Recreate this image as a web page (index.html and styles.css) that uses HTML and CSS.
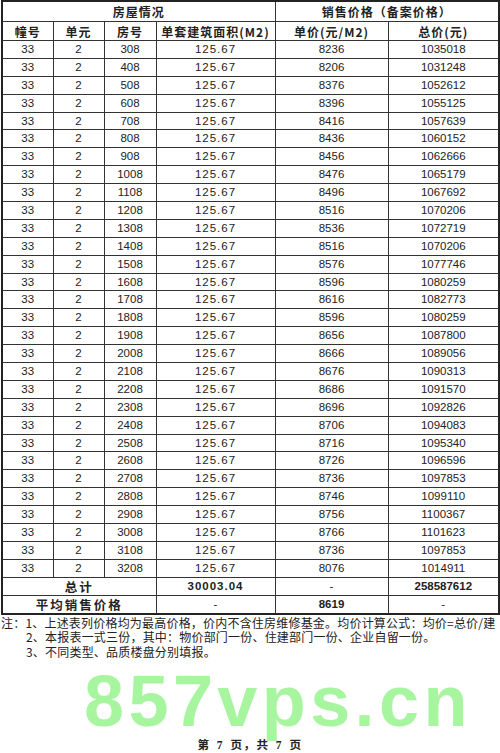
FILE: index.html
```html
<!DOCTYPE html>
<html lang="zh">
<head>
<meta charset="utf-8">
<link rel="stylesheet" href="styles.css">
</head>
<body>
<div class="page">
<table class="sheet">
<colgroup>
<col class="c1"><col class="c2"><col class="c3"><col class="c4"><col class="c5"><col class="c6">
</colgroup>
<thead>
<tr class="h1"><th colspan="4">房屋情况</th><th colspan="2">销售价格（备案价格）</th></tr>
<tr class="h2"><th>幢号</th><th>单元</th><th>房号</th><th>单套建筑面积(M2)</th><th>单价(元/M2)</th><th>总价(元)</th></tr>
</thead>
<tbody>
<tr><td>33</td><td>2</td><td>308</td><td class="area">125.67</td><td>8236</td><td>1035018</td></tr>
<tr><td>33</td><td>2</td><td>408</td><td class="area">125.67</td><td>8206</td><td>1031248</td></tr>
<tr><td>33</td><td>2</td><td>508</td><td class="area">125.67</td><td>8376</td><td>1052612</td></tr>
<tr><td>33</td><td>2</td><td>608</td><td class="area">125.67</td><td>8396</td><td>1055125</td></tr>
<tr><td>33</td><td>2</td><td>708</td><td class="area">125.67</td><td>8416</td><td>1057639</td></tr>
<tr><td>33</td><td>2</td><td>808</td><td class="area">125.67</td><td>8436</td><td>1060152</td></tr>
<tr><td>33</td><td>2</td><td>908</td><td class="area">125.67</td><td>8456</td><td>1062666</td></tr>
<tr><td>33</td><td>2</td><td>1008</td><td class="area">125.67</td><td>8476</td><td>1065179</td></tr>
<tr><td>33</td><td>2</td><td>1108</td><td class="area">125.67</td><td>8496</td><td>1067692</td></tr>
<tr><td>33</td><td>2</td><td>1208</td><td class="area">125.67</td><td>8516</td><td>1070206</td></tr>
<tr><td>33</td><td>2</td><td>1308</td><td class="area">125.67</td><td>8536</td><td>1072719</td></tr>
<tr><td>33</td><td>2</td><td>1408</td><td class="area">125.67</td><td>8516</td><td>1070206</td></tr>
<tr><td>33</td><td>2</td><td>1508</td><td class="area">125.67</td><td>8576</td><td>1077746</td></tr>
<tr><td>33</td><td>2</td><td>1608</td><td class="area">125.67</td><td>8596</td><td>1080259</td></tr>
<tr><td>33</td><td>2</td><td>1708</td><td class="area">125.67</td><td>8616</td><td>1082773</td></tr>
<tr><td>33</td><td>2</td><td>1808</td><td class="area">125.67</td><td>8596</td><td>1080259</td></tr>
<tr><td>33</td><td>2</td><td>1908</td><td class="area">125.67</td><td>8656</td><td>1087800</td></tr>
<tr><td>33</td><td>2</td><td>2008</td><td class="area">125.67</td><td>8666</td><td>1089056</td></tr>
<tr><td>33</td><td>2</td><td>2108</td><td class="area">125.67</td><td>8676</td><td>1090313</td></tr>
<tr><td>33</td><td>2</td><td>2208</td><td class="area">125.67</td><td>8686</td><td>1091570</td></tr>
<tr><td>33</td><td>2</td><td>2308</td><td class="area">125.67</td><td>8696</td><td>1092826</td></tr>
<tr><td>33</td><td>2</td><td>2408</td><td class="area">125.67</td><td>8706</td><td>1094083</td></tr>
<tr><td>33</td><td>2</td><td>2508</td><td class="area">125.67</td><td>8716</td><td>1095340</td></tr>
<tr><td>33</td><td>2</td><td>2608</td><td class="area">125.67</td><td>8726</td><td>1096596</td></tr>
<tr><td>33</td><td>2</td><td>2708</td><td class="area">125.67</td><td>8736</td><td>1097853</td></tr>
<tr><td>33</td><td>2</td><td>2808</td><td class="area">125.67</td><td>8746</td><td>1099110</td></tr>
<tr><td>33</td><td>2</td><td>2908</td><td class="area">125.67</td><td>8756</td><td>1100367</td></tr>
<tr><td>33</td><td>2</td><td>3008</td><td class="area">125.67</td><td>8766</td><td>1101623</td></tr>
<tr><td>33</td><td>2</td><td>3108</td><td class="area">125.67</td><td>8736</td><td>1097853</td></tr>
<tr><td>33</td><td>2</td><td>3208</td><td class="area">125.67</td><td>8076</td><td>1014911</td></tr>
<tr class="sum"><th colspan="3">总计</th><td class="area b">30003.04</td><td>-</td><td class="b">258587612</td></tr>
<tr class="sum"><th colspan="3">平均销售价格</th><td>-</td><td class="b">8619</td><td>-</td></tr>
</tbody>
</table>
<div class="notes">
<p>注：1、上述表列价格均为最高价格，价内不含住房维修基金。均价计算公式：均价=总价/建</p>
<p class="ind">2、本报表一式三份，其中：物价部门一份、住建部门一份、企业自留一份。</p>
<p class="ind">3、不同类型、品质楼盘分别填报。</p>
</div>
<div class="mark">857vps.cn</div>
<div class="footer">第 7 页，共 7 页</div>
</div>
</body>
</html>
```
FILE: styles.css
```css
html, body {
  margin: 0;
  padding: 0;
  background: #fff;
}
.page {
  position: relative;
  width: 500px;
  height: 753px;
  overflow: hidden;
  padding: 0 2px 0 1px;
  box-sizing: border-box;
  font-family: "Liberation Sans", "Noto Sans CJK SC", sans-serif;
  color: #222;
}
.sheet {
  width: 497px;
  border-collapse: collapse;
  table-layout: fixed;
  border: 2px solid #222;
}
.c1 { width: 51px; }
.c2 { width: 51px; }
.c3 { width: 52px; }
.c4 { width: 119px; }
.c5 { width: 113px; }
.c6 { width: 111px; }
.sheet th, .sheet td {
  border: 1px solid #333;
  padding: 0;
  text-align: center;
  vertical-align: middle;
  white-space: nowrap;
  overflow: hidden;
}
.sheet th {
  font-family: "Noto Sans CJK SC", sans-serif;
  font-weight: 700;
  font-size: 12px;
  letter-spacing: 1px;
}
.h1 th { height: 19px; line-height: 18px; }
.h2 th { height: 18px; line-height: 17px; }
.sheet td {
  height: 16.9px;
  font-size: 11.5px;
  line-height: 15px;
}
.sheet td.area {
  letter-spacing: 1px;
}
.sheet td.b { font-weight: 700; }
.sum th, .sum td { height: 17px; line-height: 15px; }
.sum th { letter-spacing: 2px; font-size: 12.5px; }
.notes {
  margin-top: 1px;
  font-family: "Noto Sans CJK SC", sans-serif;
  font-size: 12px;
  line-height: 14.5px;
  letter-spacing: 0.2px;
  color: #222;
}
.notes p { margin: 0; white-space: nowrap; }
.notes .ind { padding-left: 25px; }
.mark {
  position: absolute;
  left: 84px;
  top: 656px;
  font-family: "Liberation Sans", sans-serif;
  font-weight: 700;
  font-size: 72px;
  line-height: 90px;
  color: #a8f5a0;
  letter-spacing: 4.4px;
  white-space: nowrap;
}
.footer {
  position: absolute;
  left: 0;
  right: 0;
  top: 738px;
  text-align: center;
  font-family: "Liberation Serif", "Noto Sans CJK SC", serif;
  font-size: 11.5px;
  font-weight: 700;
  line-height: 14px;
  letter-spacing: 1.5px;
  word-spacing: 2px;
}
```
